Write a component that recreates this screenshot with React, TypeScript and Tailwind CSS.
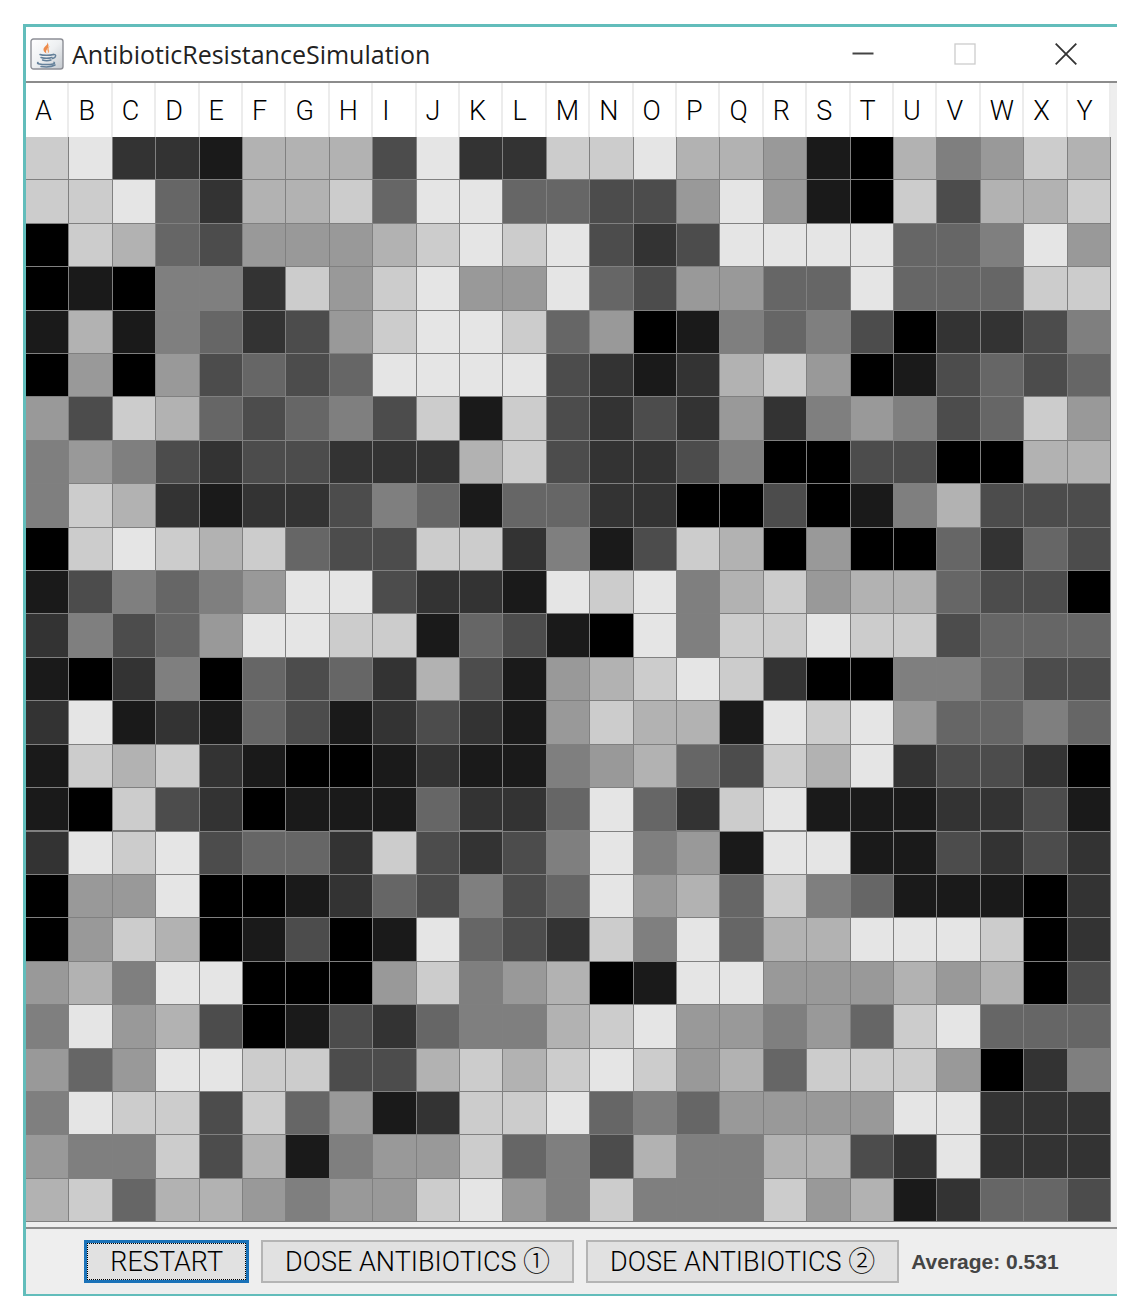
const COLUMNS = 'ABCDEFGHIJKLMNOPQRSTUVWXY'.split('');

// One digit per cell: 0 is black, 9 is the lightest grey.
const ROWS = [
  '8922177739228897761075687',
  '8894277849944336961083778',
  '0874366678989323999944596',
  '0105528689669436644944488',
  '1715423689984601545302235',
  '0606343499993212786013434',
  '6387434538183232625653486',
  '5653233222783223500330077',
  '5872122354144220030157333',
  '0898784338825138706004243',
  '1354569932219895786774330',
  '2534699881431095889883444',
  '1025043427316789820055433',
  '2912143123216877198964454',
  '1878210012115674387923320',
  '1083201114224942891112231',
  '2989344283235956199113232',
  '0669001243534967485411102',
  '0687013019432859477999802',
  '6759900068567019966676703',
  '5967301324557896656489444',
  '6469988337878986748886025',
  '5988384612889454666699222',
  '6558371566845375577329222',
  '7847765668965855586712443',
];

const SHADES = [
  'bg-black',
  'bg-[#1a1a1a]',
  'bg-[#333333]',
  'bg-[#4c4c4c]',
  'bg-[#666666]',
  'bg-[#7f7f7f]',
  'bg-[#999999]',
  'bg-[#b2b2b2]',
  'bg-[#cccccc]',
  'bg-[#e5e5e5]',
];

const GRID_ROW = 'grid grid-cols-[repeat(25,minmax(0,1fr))]';

function JavaIcon() {
  return (
    <svg viewBox="0 0 34 32" className="h-8 w-[34px] shrink-0" aria-hidden="true">
      <defs>
        <linearGradient id="tile" x1="0" y1="0" x2="1" y2="1">
          <stop offset="0" stopColor="#ffffff" />
          <stop offset="0.5" stopColor="#eef0f2" />
          <stop offset="1" stopColor="#c3c8ce" />
        </linearGradient>
      </defs>
      <rect x="1" y="1" width="32" height="30" rx="2.5" fill="url(#tile)" stroke="#8d8f96" strokeWidth="1.4" />
      <path d="M17 4c2 3-4 4.500-3.500 8 .2 1.500 1.500 2.500 3 3.500-.8-2-.5-3 .8-4.500C19 9 19 6.500 17 4z" fill="#ee8a4a" />
      <path d="M20 8c-2 1.200-3.200 2.800-2.600 4.300.4 1 1 1.700.2 3.200 2.200-1.500 1.700-2.700 1.200-3.800C18.400 10.500 19 9.200 20 8z" fill="#f2a873" />
      <g fill="none" stroke="#64809a" strokeWidth="1.500" strokeLinecap="round">
        <path d="M10 16.500c3 1.200 10 1.100 13.500 0" />
        <path d="M11 19.500c3 .9 8 .9 11 0" />
        <path d="M12.500 22c2.500.8 6 .8 8.500 0" />
        <path d="M23.500 16.500c3-.5 3 3-.8 4" />
        <path d="M8 24.500c-2 1.200 3 2 8.500 2s9.500-.8 7.500-2.200" />
        <path d="M11 28.500c5 .7 11 .3 14-1.500" />
      </g>
    </svg>
  );
}

function WindowControls() {
  return (
    <div className="flex h-full">
      <button type="button" aria-label="Minimize" className="flex w-[102px] items-center justify-center">
        <svg viewBox="0 0 22 22" className="size-[22px]" aria-hidden="true">
          <path d="M0.500 10.500h21" stroke="#444" strokeWidth="2" />
        </svg>
      </button>
      <button type="button" aria-label="Maximize" disabled className="flex w-[101px] items-center justify-center">
        <svg viewBox="0 0 22 22" className="size-[22px]" aria-hidden="true">
          <rect x="1" y="1" width="20" height="20" fill="none" stroke="#cccccc" strokeWidth="1.300" />
        </svg>
      </button>
      <button type="button" aria-label="Close" className="flex w-[102px] items-center justify-center">
        <svg viewBox="0 0 22 22" className="size-[22px]" aria-hidden="true">
          <path d="M0.700 0.700 21.300 21.300M21.300 0.700 0.700 21.300" stroke="#333" strokeWidth="1.800" />
        </svg>
      </button>
    </div>
  );
}

const BUTTON =
  "flex h-[43px] items-center justify-center whitespace-nowrap bg-[#e1e1e1] font-['Roboto','Noto_Sans_CJK_KR',sans-serif] text-[27px] leading-8 font-light text-black";

export default function App() {
  return (
    <main className="min-h-screen bg-white pt-6 pr-[17px] pb-4 pl-[23px]">
      <div className="border-t-[3px] border-b-2 border-l-[3px] border-[#62bdbb] bg-[#eeeeee]">
        <header className="flex h-[54px] items-center bg-white pl-1">
          <JavaIcon />
          <h1 className="ml-2 flex-1 font-['Open_Sans','Noto_Sans',sans-serif] text-[25px] leading-8 text-[#222]">
            AntibioticResistanceSimulation
          </h1>
          <WindowControls />
        </header>

        <div className="border-y-2 border-[#8c8c8c] pr-[6px] pb-[5px]">
          <table className="block w-full">
            <thead className="block">
              <tr className={GRID_ROW}>
                {COLUMNS.map((name) => (
                  <th
                    key={name}
                    scope="col"
                    className="h-[54px] border-r-2 border-[#ececec] bg-white pl-[9px] text-left font-['Roboto',sans-serif] text-[27px] leading-[56px] font-light text-black"
                  >
                    {name}
                  </th>
                ))}
              </tr>
            </thead>
            <tbody className="block bg-[#808080]">
              {ROWS.map((row, r) => (
                <tr key={r} className={GRID_ROW}>
                  {row.split('').map((level, c) => (
                    <td key={c} className={`aspect-square border-r border-b border-[#808080] p-0 ${SHADES[Number(level)]}`} />
                  ))}
                </tr>
              ))}
            </tbody>
          </table>
        </div>

        <footer className="flex h-[65px] items-center justify-center gap-3">
          <button
            type="button"
            className={`${BUTTON} border-[3px] border-[#1a72b8] px-[23px] outline-1 -outline-offset-4 outline-dotted outline-black`}
          >
            RESTART
          </button>
          <button type="button" className={`${BUTTON} border-2 border-[#b4b4b4] px-[22px]`}>
            DOSE ANTIBIOTICS ①
          </button>
          <button type="button" className={`${BUTTON} border-2 border-[#b4b4b4] px-[22px]`}>
            DOSE ANTIBIOTICS ②
          </button>
          <p className="font-['Liberation_Sans',Arial,sans-serif] text-[21px] font-bold whitespace-nowrap text-[#444]">
            Average: 0.531
          </p>
        </footer>
      </div>
    </main>
  );
}
